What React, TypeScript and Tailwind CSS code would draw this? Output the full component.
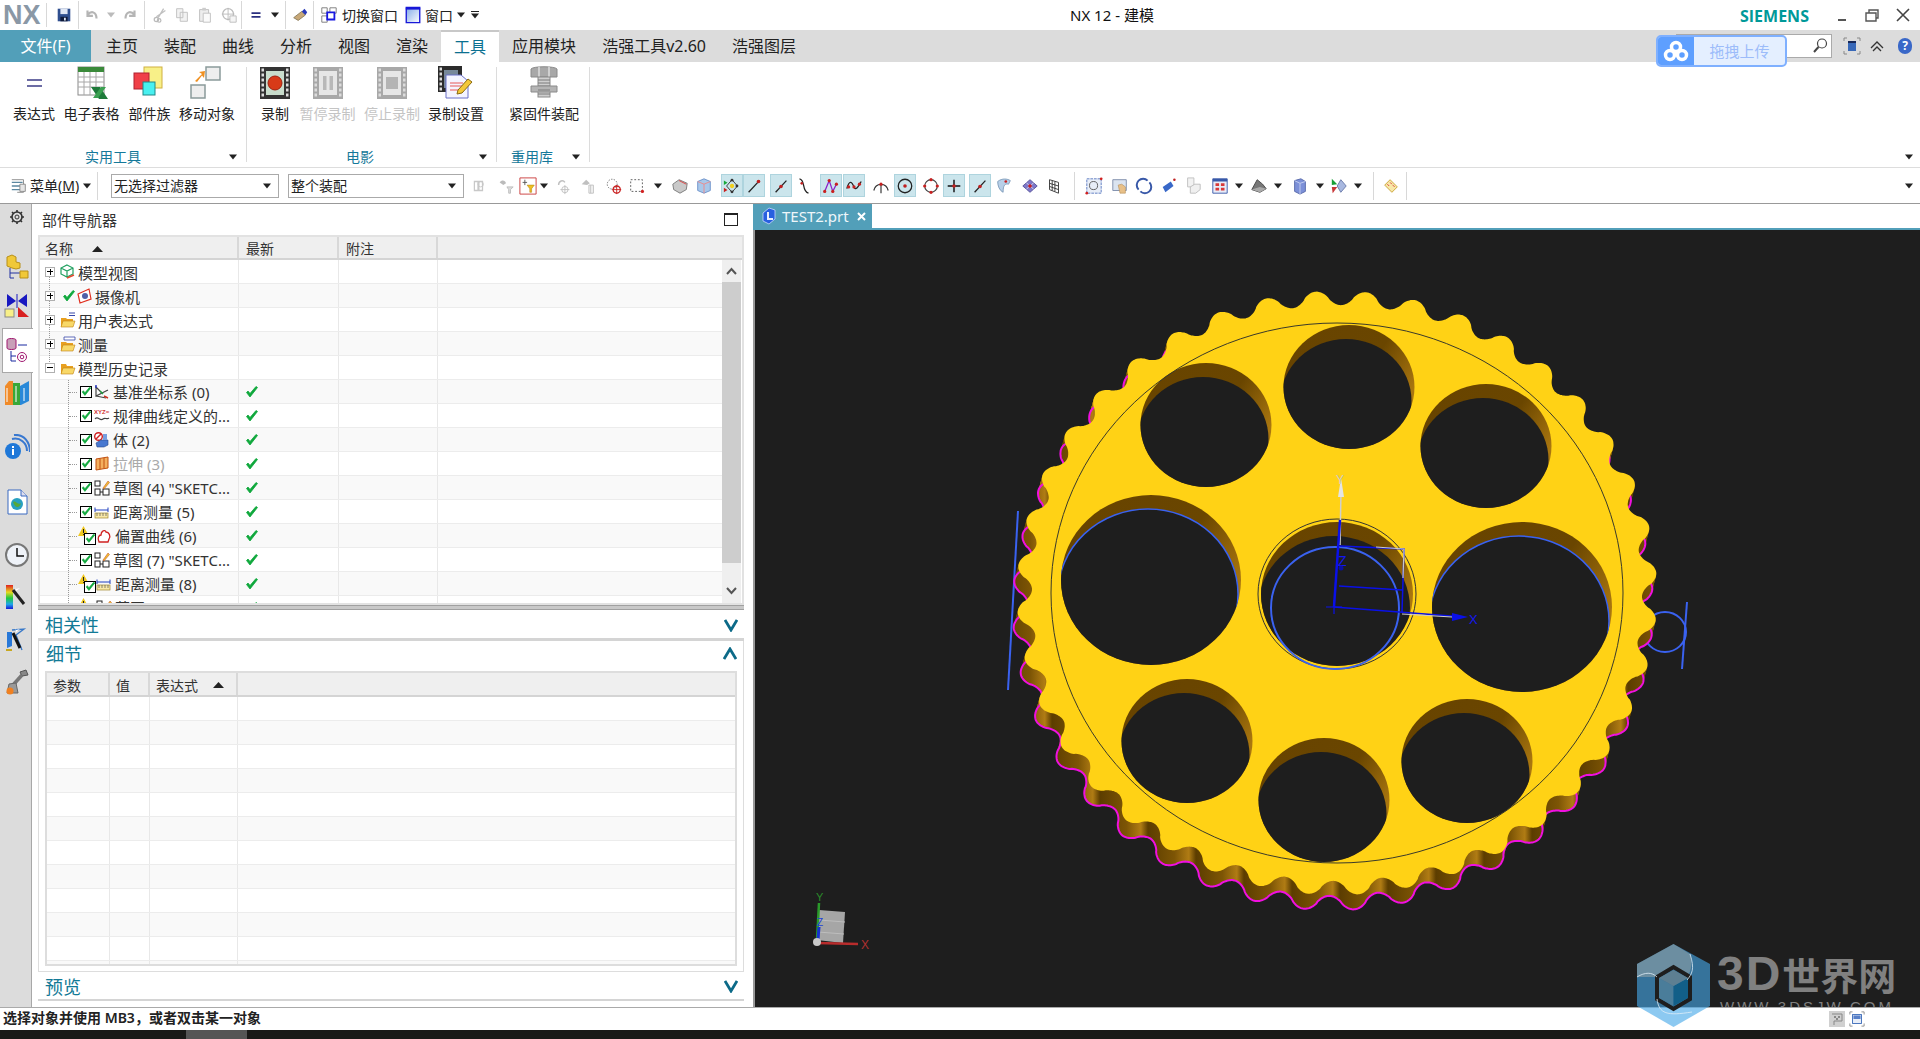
import React from "react";

const cx = 1337, cy = 593, Rx = 320, Ry = 302;
function gearPath() {
  const pts: string[] = [];
  const N = 40, th0 = (5.2 * Math.PI) / 180, A = 15 / 320;
  for (let i = 0; i < 2000; i++) {
    const t = (i / 2000) * Math.PI * 2;
    const c = Math.cos(N * (t - th0));
    const s = Math.sign(c) * Math.pow(Math.abs(c), 0.78);
    const r = 1 - (A * (1 - s)) / 2;
    pts.push(`${(cx + Rx * r * Math.sin(t)).toFixed(1)},${(cy - Ry * r * Math.cos(t)).toFixed(1)}`);
  }
  return "M" + pts.join("L") + "Z";
}
const GEAR = gearPath();
const WALL = [1, 2, 3, 4, 5, 6, 7, 8, 9, 10, 11, 12];
const HOLES = [
  { x: 1349, y: 387, rx: 65.5, ry: 62 },
  { x: 1206, y: 425, rx: 65.5, ry: 62 },
  { x: 1486, y: 446, rx: 65.5, ry: 62 },
  { x: 1151, y: 580, rx: 90, ry: 85, blue: true },
  { x: 1522, y: 607, rx: 90, ry: 85, blue: true },
  { x: 1337, y: 594, rx: 76, ry: 72 },
  { x: 1187, y: 741, rx: 65.5, ry: 62 },
  { x: 1324, y: 800, rx: 65.5, ry: 62 },
  { x: 1467, y: 761, rx: 65.5, ry: 62 },
];

function Model() {
  return (
    <svg viewBox="755 230 1165 777" className="block w-[1165px] h-[777px]">
      <defs>
        <linearGradient id="wall" gradientUnits="userSpaceOnUse" x1="0" y1="0" x2="48" y2="0" spreadMethod="repeat">
          <stop offset="0" stopColor="#5c3d00" />
          <stop offset="0.55" stopColor="#7d5505" />
          <stop offset="0.85" stopColor="#b07c14" />
          <stop offset="1" stopColor="#5c3d00" />
        </linearGradient>
        <linearGradient id="crescent" x1="0.2" y1="0" x2="1" y2="0.5">
          <stop offset="0" stopColor="#684400" />
          <stop offset="0.6" stopColor="#6a4600" />
          <stop offset="1" stopColor="#a9760f" />
        </linearGradient>
        {HOLES.map((h, i) => (
          <clipPath id={`hole${i}`} key={i}>
            <ellipse cx={h.x} cy={h.y} rx={h.rx} ry={h.ry} />
          </clipPath>
        ))}
      </defs>
      <line x1="1018" y1="511" x2="1008" y2="690" stroke="#3a62f0" strokeWidth="2" />
      <line x1="1687" y1="602" x2="1682" y2="669" stroke="#3a62f0" strokeWidth="2" />
      <ellipse cx="1665" cy="632" rx="21" ry="20" fill="none" stroke="#3a62f0" strokeWidth="2" />
      {WALL.map((k) => (
        <path key={k} d={GEAR} transform={`translate(${(-4 * k) / 12} ${(15 * k) / 12})`} fill="url(#wall)" />
      ))}
      <path d={GEAR} transform="translate(-4 15)" fill="none" stroke="#f010e0" strokeWidth="2" />
      <path d={GEAR} fill="#ffd215" />
      {HOLES.map((h, i) => (
        <g key={i}>
          <ellipse cx={h.x} cy={h.y} rx={h.rx} ry={h.ry} fill="url(#crescent)" />
          <ellipse clipPath={`url(#hole${i})`} cx={h.x - 3} cy={h.y + 14} rx={h.rx} ry={h.ry} fill="#1e1e1e" stroke={h.blue ? "#3a62f0" : "none"} strokeWidth="1.5" />
        </g>
      ))}
      <ellipse cx={cx} cy={cy} rx="286" ry="270" fill="none" stroke="#3a3a2a" strokeWidth="1" />
      <ellipse cx="1337" cy="594" rx="79" ry="75" fill="none" stroke="#333" strokeWidth="1" />
      <ellipse cx="1335" cy="608" rx="64" ry="61" fill="none" stroke="#3a62f0" strokeWidth="2" />
      <line x1="1341" y1="490" x2="1340" y2="545" stroke="#cfcfcf" strokeWidth="1.5" />
      <path d="M1341 478 L1344 497 L1338 497 Z" fill="#e4e4e4" />
      <text x="1336" y="484" fill="#c8c8c8" fontSize="12" fontFamily="Liberation Sans, sans-serif">Y</text>
      <line x1="1334" y1="607" x2="1340" y2="520" stroke="#0a10e8" strokeWidth="2.5" />
      <line x1="1334" y1="607" x2="1464" y2="617" stroke="#0a10e8" strokeWidth="1.5" />
      <line x1="1402" y1="614" x2="1452" y2="617" stroke="#cfcfcf" strokeWidth="1" />
      <path d="M1452 613 L1468 617 L1452 621 Z" fill="#0a10e8" />
      <text x="1469" y="624" fill="#1418f0" fontSize="13" fontFamily="Liberation Sans, sans-serif">X</text>
      <text x="1338" y="566" fill="#1418f0" fontSize="14" fontFamily="Liberation Sans, sans-serif">Z</text>
      <circle cx="1341" cy="568" r="2.5" fill="#0a10a0" />
      <path d="M1340 546 L1404 549 L1402 612" fill="none" stroke="#0a10e8" strokeWidth="1.5" />
      <path d="M1376 547 L1404 549 L1403 578" fill="none" stroke="#c8c8c8" strokeWidth="1.2" />
      <line x1="1339" y1="586" x2="1402" y2="590" stroke="#0a10e8" strokeWidth="1.5" />
      <path d="M1326 607 H1342 M1334 600 V614" stroke="#0a10e8" strokeWidth="1.2" />
      <path d="M819 910 L845 912 L843 943 L817 940 Z" fill="#a6a6a6" />
      <path d="M819 920 L845 922 M818 932 L844 934" stroke="#bdbdbd" strokeWidth="1" />
      <line x1="817" y1="940" x2="819" y2="903" stroke="#2a9a2a" strokeWidth="2.5" />
      <line x1="817" y1="943" x2="858" y2="944" stroke="#b82c2c" strokeWidth="2.5" />
      <line x1="818" y1="940" x2="819" y2="927" stroke="#1430d0" strokeWidth="3" />
      <circle cx="817" cy="942" r="4" fill="#c8c8c8" />
      <text x="816" y="901" fill="#2a8a2a" fontSize="11" fontFamily="Liberation Sans, sans-serif">Y</text>
      <text x="861" y="949" fill="#b03030" fontSize="12" fontFamily="Liberation Sans, sans-serif">X</text>
      <text x="817" y="926" fill="#1c40d8" fontSize="10" fontFamily="Liberation Sans, sans-serif">Z</text>
    </svg>
  );
}

const Arrow = ({ c = "#222" }: { c?: string }) => (
  <svg width="10" height="6" viewBox="0 0 10 6" className="shrink-0"><path d="M1 0.5H9L5 5.5Z" fill={c} /></svg>
);

function Ic({ k, s = 20 }: { k: string; s?: number }) {
  const p = { width: s, height: s, viewBox: "0 0 20 20", className: "shrink-0" };
  switch (k) {
    case "save": return <svg {...p}><path d="M3 3H17V17H3Z" fill="#2f4f8f" /><path d="M6 3H14V9H6Z" fill="#dfe6f4" /><path d="M6 12H14V17H6Z" fill="#0e1a3a" /><path d="M10 13H12V16H10Z" fill="#dfe6f4" /></svg>;
    case "undo": return <svg {...p}><path d="M5 5V11H11M5 10C9 5 15 6 15 14" fill="none" stroke="#b5b5b5" strokeWidth="2.4" /></svg>;
    case "redo": return <svg {...p}><path d="M15 5V11H9M15 10C11 5 5 6 5 14" fill="none" stroke="#b5b5b5" strokeWidth="2.4" /></svg>;
    case "cut": return <svg {...p}><path d="M14 3L8 13M16 5L6 12" stroke="#c0c0c0" strokeWidth="1.5" /><circle cx="6" cy="15" r="2.4" fill="none" stroke="#bbb" strokeWidth="1.4" /><circle cx="9" cy="16" r="2" fill="none" stroke="#bbb" strokeWidth="1.4" /></svg>;
    case "copy": return <svg {...p}><path d="M4 3H11V13H4Z M8 7H16V17H8Z" fill="#f2f2f2" stroke="#c0c0c0" /></svg>;
    case "paste": return <svg {...p}><path d="M4 4H14V17H4Z" fill="#ededed" stroke="#bbb" /><path d="M7 2H11V5H7Z" fill="#ccc" /><path d="M8 8H16V18H8Z" fill="#fafafa" stroke="#c0c0c0" /></svg>;
    case "target": return <svg {...p}><circle cx="9" cy="9" r="6" fill="none" stroke="#bbb" strokeWidth="1.4" /><path d="M9 2V16M2 9H16" stroke="#bbb" /><path d="M11 11H18V18H11Z" fill="#f5f5f5" stroke="#bbb" /></svg>;
    case "eq": return <svg {...p}><path d="M5 8H15M5 12H15" stroke="#2a2f7f" strokeWidth="2" /></svg>;
    case "repeat": return <svg {...p}><path d="M3 13L12 6L16 10L8 16Z" fill="#c8a878" stroke="#8a7a5a" /><path d="M12 6L15 3L18 7L16 10Z" fill="#2838b8" /></svg>;
    case "switch": return <svg {...p}><path d="M2 2H8V8H2Z M11 2H18V8H11Z M2 11H8V18H2Z" fill="#fff" stroke="#777" /><path d="M8 7H16V15H8Z" fill="#fff" stroke="#1818e0" strokeWidth="2" /></svg>;
    case "window": return <svg {...p}><defs><linearGradient id="wg" x1="0" y1="0" x2="1" y2="1"><stop offset="0" stopColor="#7fa8e8" /><stop offset="1" stopColor="#fff" /></linearGradient></defs><path d="M2.5 1.5H17.5V18.5H2.5Z" fill="url(#wg)" stroke="#1818d8" strokeWidth="1.5" /><path d="M2 2H18V4H2Z" fill="#1818d8" /></svg>;
    case "menu": return <svg {...p}><path d="M2 6H14M2 10H14M2 14H14" stroke="#5b87a0" strokeWidth="1.6" /><path d="M2 3H15V17H8" fill="none" stroke="#888" /><path d="M11 8H17V16H11Z" fill="#e6e6e6" stroke="#888" /></svg>;
    case "g1": return <svg {...p}><path d="M6 5H10V15H6Z M11 5H15V15H11Z" fill="none" stroke="#c8c8c8" strokeWidth="1.4" /><circle cx="13" cy="8" r="3" fill="none" stroke="#c8c8c8" /></svg>;
    case "g2": return <svg {...p}><path d="M3 6C5 3 9 3 10 7L7 9Z" fill="#bbb" /><path d="M11 11H18L15 14V18H13V14Z" fill="#ddd" stroke="#bbb" /></svg>;
    case "filter": return <svg {...p}><path d="M1 1H19V19H1Z" fill="#fff" stroke="#c83838" /><path d="M4 6H9M6.5 3V9" stroke="#555" /><path d="M9 9H17L14 13V17H12V13Z" fill="#f0c020" stroke="#b08010" strokeWidth=".6" /></svg>;
    case "g3": return <svg {...p}><path d="M4 9C4 4 9 3 11 6" fill="none" stroke="#c0c0c0" strokeWidth="1.6" /><circle cx="11" cy="14" r="3.5" fill="none" stroke="#c0c0c0" /><path d="M11 9V19M6 14H16" stroke="#c0c0c0" /></svg>;
    case "g4": return <svg {...p}><path d="M3 8L8 3L12 7L9 9Z" fill="#c0c0c0" /><path d="M11 9H16V18H11Z" fill="#f4f4f4" stroke="#c0c0c0" /><path d="M13 9V18" stroke="#c0c0c0" /></svg>;
    case "g5": return <svg {...p}><circle cx="8" cy="8" r="5.5" fill="none" stroke="#666" strokeDasharray="1.5 1.5" /><circle cx="13" cy="14" r="4" fill="none" stroke="#c82020" strokeWidth="1.4" /><path d="M13 9V19M8 14H18" stroke="#c82020" /></svg>;
    case "dash": return <svg {...p}><path d="M3 3H16V16H3Z" fill="none" stroke="#555" strokeDasharray="2 2" /><circle cx="16" cy="16" r="1.8" fill="#d02020" /></svg>;
    case "box1": return <svg {...p}><path d="M2 8L9 3L18 7L17 14L10 18L3 14Z" fill="#c9c9c9" stroke="#777" /><path d="M9 4L17 8" stroke="#e04040" /></svg>;
    case "box2": return <svg {...p}><path d="M3 5L10 2L17 5V15L10 18L3 15Z" fill="#a9c8ea" stroke="#6a90c8" /><path d="M3 5L10 8L17 5M10 8V18" stroke="#e88" fill="none" /></svg>;
    case "snap1": return <svg {...p}><path d="M10 3L16 10L10 17L4 10Z" fill="none" stroke="#333" /><circle cx="10" cy="10" r="2.4" fill="#f0d020" /><circle cx="10" cy="3.5" r="1.6" fill="#333" /><circle cx="10" cy="16.5" r="1.6" fill="#333" /><circle cx="15.5" cy="10" r="1.6" fill="#333" /><path d="M1 4L5 6.5L1 9Z" fill="#18a838" /><path d="M1 12L5 14.5L1 17Z" fill="#c82020" /></svg>;
    case "end": return <svg {...p}><path d="M4 17L16 4" stroke="#222" strokeWidth="1.4" /><circle cx="15" cy="5" r="2" fill="#c02020" /></svg>;
    case "mid": return <svg {...p}><path d="M4 17L16 4" stroke="#222" strokeWidth="1.4" /><circle cx="10" cy="10.5" r="2" fill="#c02020" /></svg>;
    case "s": return <svg {...p}><path d="M5 2C12 3 7 16 15 18" fill="none" stroke="#222" strokeWidth="1.4" /><circle cx="7.5" cy="7" r="1.5" fill="#c02020" /></svg>;
    case "ctrl": return <svg {...p}><path d="M3 16L8 4L12 16L16 8" fill="none" stroke="#8a20c8" strokeWidth="1.4" /><circle cx="3" cy="16" r="1.8" fill="#c82020" /><circle cx="8" cy="4" r="1.8" fill="#c82020" /><circle cx="12" cy="16" r="1.8" fill="#c82020" /><circle cx="16" cy="8" r="1.8" fill="#c82020" /></svg>;
    case "wave": return <svg {...p}><path d="M2 13C5 2 8 6 10 11C12 16 15 10 18 5" fill="none" stroke="#222" strokeWidth="1.4" /><circle cx="4" cy="11" r="1.8" fill="#c82020" /><circle cx="10" cy="11" r="1.8" fill="#c82020" /><circle cx="16" cy="8" r="1.8" fill="#c82020" /></svg>;
    case "arc": return <svg {...p}><path d="M2 15C4 6 16 6 18 15M10 8V18" fill="none" stroke="#333" strokeWidth="1.3" /><circle cx="10" cy="8" r="1.8" fill="#c82020" /></svg>;
    case "circ": return <svg {...p}><circle cx="10" cy="10" r="7.5" fill="none" stroke="#222" strokeWidth="1.4" /><circle cx="10" cy="10" r="2" fill="#c02020" /></svg>;
    case "circ2": return <svg {...p}><circle cx="10" cy="10" r="7" fill="none" stroke="#444" strokeWidth="1.3" />{[[10,3],[10,17],[3,10],[17,10]].map((a,i)=><circle key={i} cx={a[0]} cy={a[1]} r="1.8" fill="#c82020" />)}</svg>;
    case "cross": return <svg {...p}><path d="M10 3V17M3 10H17" stroke="#111" strokeWidth="1.6" /><circle cx="10" cy="10" r="2" fill="#c02020" /></svg>;
    case "surf": return <svg {...p}><path d="M3 5C8 1 14 2 17 4L15 8C11 7 9 9 9 17C5 15 3 10 3 5Z" fill="#b8d0e8" stroke="#7a98b8" /><circle cx="12" cy="5" r="1.5" fill="#c82020" /></svg>;
    case "diamond": return <svg {...p}><path d="M10 3L18 10L10 17L2 10Z" fill="#7e78c8" stroke="#55509a" /><path d="M6 6.5L14 13.5M14 6.5L6 13.5" stroke="#d8d8f0" /><circle cx="10" cy="10" r="2" fill="#c82020" /></svg>;
    case "grid": return <svg {...p}><path d="M5 3L15 6V18L5 14Z M8 4V15M11 5V16M5 7L15 10M5 10.500L15 14" fill="none" stroke="#333" /></svg>;
    case "fit": return <svg {...p}><path d="M2 2H18V18H2Z" fill="#e8eef8" stroke="#5878c0" strokeDasharray="3 1" /><circle cx="9.500" cy="9.500" r="4.500" fill="none" stroke="#555" /><circle cx="18" cy="2" r="1.500" fill="#d02020" /><circle cx="2" cy="18" r="1.500" fill="#d02020" /></svg>;
    case "hand": return <svg {...p}><path d="M2 3H17V15H2Z" fill="#dbe4f0" stroke="#7a8aa8" /><path d="M8 9L12 8L16 11V18H10Z" fill="#e8c088" stroke="#b08850" strokeWidth=".6" /></svg>;
    case "rot": return <svg {...p}><path d="M4 14A7 7 0 0 1 14 4M16 6A7 7 0 0 1 6 16" fill="none" stroke="#3858a8" strokeWidth="2.2" /></svg>;
    case "cyl": return <svg {...p}><path d="M3 11L12 5L15 10L6 17Z" fill="#3868c8" /><circle cx="16" cy="3" r="1.400" fill="#c02020" /></svg>;
    case "ghost": return <svg {...p}><path d="M4 1H11V11H4Z" fill="#f2f2f2" stroke="#c0c0c0" /><path d="M7 11L12 8H18V14L13 18H7Z" fill="#f0f0f0" stroke="#bbb" /></svg>;
    case "win4": return <svg {...p}><path d="M2 2H18V18H2Z" fill="#e8ecf8" stroke="#3858a8" /><path d="M2 2H18V5H2Z" fill="#3858a8" /><path d="M5 7H9V10H5Z M11 7H15V10H11Z M5 12H9V15H5Z M11 12H15V15H11Z" fill="#d83838" /></svg>;
    case "shade": return <svg {...p}><path d="M2 14L8 3L14 8L18 13L11 17Z" fill="#777" stroke="#444" /><path d="M2 14L11 17L18 13L11 11Z" fill="#aaa" /></svg>;
    case "cube": return <svg {...p}><path d="M4 4L11 2L16 5V16L10 19L4 16Z" fill="#7c90d8" stroke="#5668a8" /><path d="M4 4L10 7L16 5M10 7V19" fill="none" stroke="#c6d0f0" /></svg>;
    case "trio": return <svg {...p}><path d="M2 2L8 8L2 9Z" fill="#18a038" /><path d="M2 11L8 11L3 18Z" fill="#c83838" /><path d="M12 3L18 10L12 17L8 10Z" fill="#a8b8e0" stroke="#6878a8" /></svg>;
    case "ruler": return <svg {...p}><path d="M3 9L9 3L17 11L11 17Z" fill="#f8e8a8" stroke="#c8a030" /><path d="M6 8L8 10M9 6L11 8M12 9L14 11" stroke="#d83838" /></svg>;
    default: return <svg {...p} />;
  }
}

function Film({ k, off }: { k: string; off?: boolean }) {
  const body = off ? "#a8a8a8" : "#333";
  return (
    <svg width="30" height="32" viewBox="0 0 30 32">
      <path d="M0 0H30V32H0Z" fill={body} />
      {[3, 8, 13, 18, 23, 28].map((y) => (
        <g key={y} fill={off ? "#dcdcdc" : "#ddd"}>
          <rect x="1.500" y={y - 1.500} width="2.500" height="3" />
          <rect x="26" y={y - 1.500} width="2.500" height="3" />
        </g>
      ))}
      <rect x="6" y="4" width="18" height="24" fill={off ? "#e6e6e6" : "#c8dccc"} />
      {k === "rec" && <circle cx="15" cy="16" r="7" fill="#d83a18" stroke="#a02010" />}
      {k === "pause" && <path d="M10 9H13.500V23H10Z M16.500 9H20V23H16.500Z" fill="#b8b8b8" />}
      {k === "stop" && <path d="M9 10H21V22H9Z" fill="#b4b4b4" />}
    </svg>
  );
}

function RibbonIcon({ k }: { k: string }) {
  switch (k) {
    case "eq": return <svg width="34" height="34" viewBox="0 0 34 34"><path d="M10 14H25M10 20H25" stroke="#3d3d86" strokeWidth="1.500" /></svg>;
    case "xls": return <svg width="34" height="34" viewBox="0 0 34 34"><rect x="3" y="1" width="26" height="28" fill="#fff" stroke="#8a8a8a" /><rect x="3" y="1" width="26" height="5" fill="#3a8a3a" /><path d="M3 11H29M3 16H29M3 21H29M9 6V29M15 6V29M21 6V29" stroke="#a8a8a8" /><path d="M16 21H25L33 33H24Z" fill="#1e7a3a" /><path d="M18 32L26 21H31L23 32Z" fill="#3aa050" /></svg>;
    case "fam": return <svg width="34" height="34" viewBox="0 0 34 34"><rect x="11" y="1" width="18" height="21" fill="#f8f088" stroke="#d0b040" /><rect x="1" y="7" width="15" height="16" fill="#f04048" stroke="#b02030" /><rect x="10" y="16" width="12" height="13" fill="#48f0f0" stroke="#208888" /></svg>;
    case "move": return <svg width="34" height="34" viewBox="0 0 34 34"><rect x="16" y="1" width="14" height="13" fill="#eee" stroke="#8a9a9a" strokeWidth="1.500" /><rect x="1" y="19" width="14" height="13" fill="#eee" stroke="#8a9a9a" strokeWidth="1.500" /><path d="M5 15L12 8L9 6L15 5L14 12L12 9.500L7 16Z" fill="#f09020" /></svg>;
    case "set": return <svg width="36" height="34" viewBox="0 0 36 34"><rect x="0" y="0" width="24" height="26" fill="#2b2b2b" />{[3,8,13,18,23].map(y=><rect key={y} x="1.500" y={y-1.500} width="2.500" height="3" fill="#ddd" />)}<rect x="6" y="4" width="14" height="18" fill="#789" /><path d="M8 9H23L30 15V32H8Z" fill="#f4f4ff" stroke="#6a70c8" /><path d="M12 17H25M12 20H25M12 24H25" stroke="#e85858" strokeWidth="1.200" /><path d="M20 24L30 13L34 16L24 27L19 28Z" fill="#f4c838" stroke="#8a6a10" /></svg>;
    case "bolt": return <svg width="34" height="34" viewBox="0 0 34 34"><path d="M4 3C6 0 28 0 30 3V11H4Z" fill="#a8a8a8" stroke="#8a8a8a" /><path d="M12 1V11M22 1V11" stroke="#ddd" strokeWidth="1.500" /><rect x="11" y="11" width="12" height="20" fill="#cfcfcf" stroke="#8a8a8a" /><path d="M11 14H23M11 17H23M11 20H23" stroke="#7a7a7a" /><path d="M4 20H30V26H4Z" fill="#b4b4b4" stroke="#8a8a8a" /><path d="M11 24H23M11 28H23" stroke="#7a7a7a" /></svg>;
    default: return null;
  }
}

const RB = ({ ic, label, cls, off, film }: { ic?: string; label: string; cls: string; off?: boolean; film?: string }) => (
  <div className={`flex flex-col items-center pt-[4px] ${cls}`}>
    <div className="h-[34px] flex items-center justify-center">{film ? <Film k={film} off={off} /> : <RibbonIcon k={ic!} />}</div>
    <div className={`mt-[4px] leading-[20px] text-[14px] whitespace-nowrap ${off ? "text-[#c4c4c4]" : "text-[#222]"}`}>{label}</div>
  </div>
);

const GroupFoot = ({ label, lw, aml }: { label: string; lw: string; aml: string }) => (
  <div className="h-[20px] flex items-center mt-auto mb-[0px]">
    <div className={`${lw} text-center text-[14px] leading-[20px] text-[#15799a] whitespace-nowrap`}>{label}</div>
    <div className={aml}><Arrow /></div>
  </div>
);

const Tab = ({ t, active }: { t: string; active?: boolean }) => (
  <div className={`h-[32px] px-[13px] flex items-center text-[16px] leading-none whitespace-nowrap ${active ? "bg-white text-[#0b7090] border-t-2 border-[#c8c8c8]" : "text-[#222]"}`}>{t}</div>
);

const TB = ({ k, ml, sel }: { k: string; ml: string; sel?: boolean }) => (
  <div className={`w-[22px] h-[23px] shrink-0 flex items-center justify-center ${ml} ${sel ? "bg-[#cbe5ec] border border-[#aed4de]" : ""}`}><Ic k={k} s={18} /></div>
);
const TA = ({ ml }: { ml: string }) => <div className={`w-[10px] shrink-0 flex justify-center ${ml}`}><Arrow /></div>;
const TS = ({ ml }: { ml: string }) => <div className={`w-px h-[28px] shrink-0 bg-[#d8d8d8] ${ml}`} />;

const Check = ({ c = "#0fa83c", s = 14 }: { c?: string; s?: number }) => (
  <svg width={s} height={s} viewBox="0 0 14 14" className="shrink-0"><path d="M1.500 7.500L5 12L12.500 2.500L11 1.500L5 8.500L3 6Z" fill={c} stroke={c} strokeWidth=".8" /></svg>
);
const Box = () => (
  <div className="w-[12px] h-[12px] border border-black bg-white relative shrink-0">
    <div className="absolute left-[0px] top-[-1px]"><Check s={11} /></div>
  </div>
);
const Warn = () => (
  <svg width="11" height="10" viewBox="0 0 11 10" className="shrink-0"><path d="M5.500 0L11 10H0Z" fill="#f0c820" /><path d="M5 3H6V7H5Z M5 8H6V9H5Z" fill="#222" /></svg>
);
const Expander = ({ minus }: { minus?: boolean }) => (
  <div className="w-[10px] h-[10px] border border-[#b0b0b0] bg-white relative shrink-0">
    <div className="absolute left-[1px] top-[3px] w-[6px] h-px bg-black" />
    {!minus && <div className="absolute left-[3.500px] top-[1px] w-px h-[6px] bg-black" />}
  </div>
);

function TreeIcon({ k }: { k: string }) {
  const p = { width: 16, height: 16, viewBox: "0 0 16 16", className: "shrink-0" };
  switch (k) {
    case "view": return <svg {...p}><path d="M7 1L13 4V10L7 13L1 10V4Z M1 4L7 7L13 4M7 7V13" fill="none" stroke="#20a060" strokeWidth="1.200" /><path d="M7 14L14 11" stroke="#e84830" strokeWidth="1.500" /></svg>;
    case "cam": return <svg {...p}><path d="M1 6L12 1L14 11L3 15Z" fill="#fff" stroke="#e03020" strokeWidth="1.200" /><circle cx="8" cy="8" r="3" fill="#5060a8" /></svg>;
    case "folder": return <svg {...p}><path d="M1 4H6L7 6H13V14H1Z" fill="#e8a020" /><path d="M3 8H15L13 14H1Z" fill="#f8d868" stroke="#c08010" strokeWidth=".6" /></svg>;
    case "fexpr": return <svg {...p}><path d="M1 6H6L7 7H13V15H1Z" fill="#e8a020" /><path d="M3 9H15L13 15H1Z" fill="#f8d868" stroke="#c08010" strokeWidth=".6" /><path d="M9 1H15M9 3.500H15" stroke="#3848a8" /></svg>;
    case "fmeas": return <svg {...p}><path d="M1 6H6L7 7H13V15H1Z" fill="#e8a020" /><path d="M3 9H15L13 15H1Z" fill="#f8d868" stroke="#c08010" strokeWidth=".6" /><path d="M4 1H15V4H4Z" fill="#fff" stroke="#3848a8" strokeWidth=".8" /></svg>;
    case "datum": return <svg {...p}><path d="M2 3V12L8 9Z M2 12L12 14M8 9L14 6" fill="none" stroke="#444" strokeWidth="1.200" /><path d="M2 1V4" stroke="#2030c0" strokeWidth="1.400" /><path d="M10 12L14 14" stroke="#d03020" strokeWidth="1.400" /><path d="M6 7L9 10" stroke="#20a040" strokeWidth="1.400" /></svg>;
    case "law": return <svg {...p}><text x="0" y="6" fontSize="6" fontWeight="700" fill="#d03030" fontFamily="Liberation Sans, sans-serif">XYZ=</text><path d="M1 11C4 7 6 14 9 11C11 9 13 12 15 10" fill="none" stroke="#444" strokeWidth="1.100" /></svg>;
    case "body": return <svg {...p}><circle cx="4.500" cy="4.500" r="3.800" fill="#fff" stroke="#d02020" strokeWidth="1.400" /><path d="M2 7L7 2" stroke="#d02020" strokeWidth="1.400" /><path d="M2 11L7 8H14V13L10 15H3Z" fill="#4878d0" stroke="#284888" strokeWidth=".6" /><path d="M9 2H13V8H9Z" fill="#78a0e0" /></svg>;
    case "ext": return <svg {...p}><path d="M2 3L14 1V12L2 14Z" fill="#f4b060" stroke="#c05010" /><path d="M6 2.500V13M10 2V12.500" stroke="#c05010" /></svg>;
    case "sketch": return <svg {...p}><rect x="1" y="1" width="5" height="5" fill="#fff" stroke="#222" /><rect x="1" y="9" width="5" height="6" fill="#fff" stroke="#222" /><rect x="9" y="9" width="6" height="6" fill="#fff" stroke="#222" /><path d="M6 12H9" stroke="#222" /><path d="M9 8L14 1L15.500 2.500L10 9Z" fill="#f0c030" stroke="#c04020" strokeWidth=".5" /></svg>;
    case "meas": return <svg {...p}><path d="M1 6H14M1 3.500V8M14 3.500V8" stroke="#2040c0" fill="none" /><rect x="1" y="9" width="13" height="5" fill="#f8e8a8" stroke="#a08830" strokeWidth=".7" /><path d="M3 9V12M6 9V12M9 9V12M12 9V12" stroke="#555" strokeWidth=".7" /></svg>;
    case "off": return <svg {...p}><path d="M3 14C1 10 3 7 5 7C5 3 9 1 10 4C13 4 15 8 13 11L12 14Z" fill="#fff" stroke="#d02020" strokeWidth="1.300" /></svg>;
    default: return null;
  }
}

type Row = { ic: string; t: string; warn?: boolean; gray?: boolean };
const ROWS: Row[] = [
  { ic: "datum", t: "基准坐标系 (0)" },
  { ic: "law", t: "规律曲线定义的..." },
  { ic: "body", t: "体 (2)" },
  { ic: "ext", t: "拉伸 (3)", gray: true },
  { ic: "sketch", t: '草图 (4) "SKETC...' },
  { ic: "meas", t: "距离测量 (5)" },
  { ic: "off", t: "偏置曲线 (6)", warn: true },
  { ic: "sketch", t: '草图 (7) "SKETC...' },
  { ic: "meas", t: "距离测量 (8)", warn: true },
  { ic: "sketch", t: '草图 (9) "SKETC...', warn: true },
];
const ROOTS = [
  { ic: "view", t: "模型视图" },
  { ic: "cam", t: "摄像机", check: true },
  { ic: "fexpr", t: "用户表达式" },
  { ic: "fmeas", t: "测量" },
  { ic: "folder", t: "模型历史记录", minus: true },
];

const Cells = ({ odd, name, latest }: { odd: boolean; name: React.ReactNode; latest?: boolean }) => (
  <div className={`flex h-[24px] shrink-0 border-b border-[#ececec] ${odd ? "bg-[#f9f9f9]" : "bg-white"}`}>
    <div className="w-[199px] shrink-0 border-r border-[#e8e8e8] relative flex items-center">{name}</div>
    <div className="w-[100px] shrink-0 border-r border-[#e8e8e8] flex items-center pl-[6px]">{latest && <Check />}</div>
    <div className="w-[99px] shrink-0 border-r border-[#e8e8e8]" />
  </div>
);

const SideIcon = ({ k }: { k: string }) => {
  const p = { width: 26, height: 26, viewBox: "0 0 26 26" };
  switch (k) {
    case "gear": return <svg width="16" height="16" viewBox="0 0 16 16"><circle cx="8" cy="8" r="5" fill="none" stroke="#333" strokeWidth="1.600" /><circle cx="8" cy="8" r="2" fill="none" stroke="#333" /><path d="M8 1V3M8 13V15M1 8H3M13 8H15M3 3L4.500 4.500M11.500 11.500L13 13M3 13L4.500 11.500M11.500 4.500L13 3" stroke="#333" strokeWidth="1.600" /></svg>;
    case "assy": return <svg {...p}><path d="M3 3L8 1L12 3V8L16 9V14L12 15L8 14L3 12Z" fill="#f0c838" stroke="#b89018" /><path d="M6 14V24H10M6 19H24" fill="none" stroke="#2030a0" /><path d="M16 17H24V24H16Z" fill="#f0c838" stroke="#b89018" /></svg>;
    case "con": return <svg {...p}><path d="M3 1L12 8L3 14Z M23 1L14 8L23 14Z" fill="#1818c0" /><path d="M13 1V15" stroke="#1818c0" /><rect x="1" y="16" width="9" height="8" fill="#f8f088" stroke="#888" /><path d="M14 14L25 24H14Z" fill="#d82020" /></svg>;
    case "part": return <svg {...p}><path d="M2 2C2 0 11 0 11 2V10C11 12 2 12 2 10Z" fill="#c8a0b8" stroke="#a01870" /><path d="M13 7H22M6 13V23H11M6 18H11" fill="none" stroke="#1828a0" /><circle cx="17" cy="19" r="4.500" fill="none" stroke="#a01870" /><circle cx="17" cy="19" r="1.800" fill="none" stroke="#a01870" /></svg>;
    case "books": return <svg {...p}><path d="M1 6L5 1H9V25H1Z" fill="#f08a28" /><path d="M9 3H16V25H9Z" fill="#38a838" /><path d="M16 6L25 1V21L17 25H16Z" fill="#2888d8" /><path d="M3 8V22M12 6V22M20 8V21" stroke="#fff" strokeWidth="1" /></svg>;
    case "info": return <svg {...p}><path d="M8 5C16 3 23 9 23 17M10 1C20 0 26 8 26 18" fill="none" stroke="#3878d0" strokeWidth="2" /><circle cx="9" cy="17" r="8" fill="#1f78d8" /><path d="M8 12H10V14H8Z M8 15H10V21H8Z" fill="#fff" /></svg>;
    case "doc": return <svg {...p}><path d="M4 1H17L23 7V25H4Z" fill="#fff" stroke="#3868c0" /><path d="M17 1V7H23" fill="#dde" stroke="#3868c0" /><circle cx="13" cy="15" r="6" fill="#28a0c0" /><path d="M9 13C12 11 14 17 17 14C16 19 11 20 9 13Z" fill="#58a838" /></svg>;
    case "clock": return <svg {...p}><circle cx="13" cy="13" r="11" fill="#eef2f8" stroke="#777" strokeWidth="2" /><path d="M13 6V14H20" fill="none" stroke="#111" strokeWidth="1.500" /></svg>;
    case "rain": return <svg {...p}><defs><linearGradient id="rb" x1="0" y1="0" x2="0" y2="1"><stop offset="0" stopColor="#e02020" /><stop offset=".3" stopColor="#e8d820" /><stop offset=".55" stopColor="#20c840" /><stop offset=".8" stopColor="#20a8e8" /><stop offset="1" stopColor="#1818d8" /></linearGradient></defs><path d="M2 1H9V25H2Z" fill="url(#rb)" /><path d="M9 6L20 20" stroke="#222" strokeWidth="3" /><path d="M11 1L12 5L16 4L12 7Z" fill="#fff" /></svg>;
    case "wand": return <svg {...p}><path d="M3 6H8V20L3 22Z" fill="#2878d8" /><path d="M8 4L20 3L12 9L18 24" fill="none" stroke="#3878c8" strokeWidth="1.300" /><path d="M9 7L16 22" stroke="#111" strokeWidth="3" /><path d="M11 0L12 4L16 3L12 6Z" fill="#fff" /><path d="M2 24H8" stroke="#c8a820" strokeWidth="2" /></svg>;
    case "robot": return <svg {...p}><path d="M16 3L22 1L24 6L18 7Z" fill="#888" stroke="#555" /><path d="M18 6L9 16" stroke="#777" strokeWidth="3.500" /><path d="M5 15L12 14L14 24H3Z" fill="#999" stroke="#666" /><circle cx="6" cy="22" r="3.500" fill="#f08020" /></svg>;
    default: return null;
  }
};

const Side = ({ k, cls, active }: { k: string; cls: string; active?: boolean }) => (
  <div className={`shrink-0 ml-[2px] flex items-center justify-center ${cls} ${active ? "bg-white border-y border-l border-[#a8a8a8] w-[31px] relative z-10" : "w-[30px]"}`}><SideIcon k={k} /></div>
);

const Sec = ({ t, up, h, pad }: { t: string; up?: boolean; h: string; pad: string }) => (
  <div className={`${h} flex items-center justify-between pl-[7px] pr-[6px] shrink-0`}>
    <span className={`text-[18px] leading-none text-[#127a96] ${pad}`}>{t}</span>
    <div className={pad}>
      <svg width="14" height="13" viewBox="0 0 14 13" className="block">
        <path d={up ? "M1 12L7 2L13 12" : "M1 1L7 11L13 1"} fill="none" stroke="#0c6a88" strokeWidth="2.800" />
      </svg>
    </div>
  </div>
);

const Head = ({ cls, children }: { cls: string; children?: React.ReactNode }) => (
  <div className={`h-full flex items-center pt-[2px] shrink-0 border-r-2 border-[#d8d8d8] text-[14px] text-[#333] ${cls}`}>{children}</div>
);

export default function App() {
  return (
    <div className="relative w-[1920px] h-[1039px] overflow-hidden bg-white flex flex-col font-['Noto_Sans','Noto_Sans_CJK_SC',sans-serif] text-[14px]">
      {/* title */}
      <div className="h-[30px] shrink-0 flex items-center relative">
        <span className="ml-[3px] w-[39px] text-[27px] leading-none font-bold text-[#8a98a6] font-['Liberation_Sans',sans-serif]">NX</span>
        <div className="w-px h-[24px] bg-[#d8d8d8] ml-[4px]" />
        <div className="ml-[8px]"><Ic k="save" s={18} /></div>
        <TS ml="ml-[5px]" />
        <div className="ml-[4px]"><Ic k="undo" s={18} /></div>
        <div className="ml-[5px]"><Arrow c="#bbb" /></div>
        <div className="ml-[5px]"><Ic k="redo" s={18} /></div>
        <TS ml="ml-[5px]" />
        <div className="ml-[6px]"><Ic k="cut" s={18} /></div>
        <div className="ml-[4px]"><Ic k="copy" s={18} /></div>
        <div className="ml-[5px]"><Ic k="paste" s={18} /></div>
        <div className="ml-[6px]"><Ic k="target" s={18} /></div>
        <TS ml="ml-[3px]" />
        <div className="ml-[5px]"><Ic k="eq" s={18} /></div>
        <div className="ml-[5px]"><Arrow /></div>
        <TS ml="ml-[5px]" />
        <div className="ml-[5px]"><Ic k="repeat" s={18} /></div>
        <TS ml="ml-[4px]" />
        <div className="ml-[6px]"><Ic k="switch" s={18} /></div>
        <span className="ml-[4px] whitespace-nowrap text-[#222]">切换窗口</span>
        <div className="ml-[6px]"><Ic k="window" s={18} /></div>
        <span className="ml-[3px] whitespace-nowrap text-[#222]">窗口</span>
        <div className="ml-[3px]"><Arrow /></div>
        <div className="ml-[4px] flex flex-col items-center gap-[1px]"><div className="w-[8px] h-px bg-[#222]" /><Arrow /></div>
        <div className="absolute left-[1070px] top-[4px] text-[15px] leading-[22px] whitespace-nowrap text-[#111]">NX 12 - 建模</div>
        <span className="absolute left-[1740px] top-[6px] text-[16px] leading-[20px] font-bold text-[#009999] font-['Open_Sans',sans-serif]">SIEMENS</span>
        <svg className="absolute left-[1838px] top-[8px]" width="76" height="16" viewBox="0 0 76 16">
          <path d="M0 12H8" stroke="#555" strokeWidth="2" />
          <path d="M28 5H38V13H28Z M31 5V2H40V10H38" fill="none" stroke="#555" strokeWidth="1.400" />
          <path d="M59 1L71 13M71 1L59 13" stroke="#444" strokeWidth="1.600" />
        </svg>
      </div>

      {/* tabs */}
      <div className="h-[32px] shrink-0 bg-[#dcdcdc] flex items-center relative">
        <div className="w-[91px] h-[32px] bg-[#529fb9] text-white text-[16px] flex items-center justify-center mr-[2px]">文件(F)</div>
        {["主页", "装配", "曲线", "分析", "视图", "渲染"].map((t) => <Tab key={t} t={t} />)}
        <Tab t="工具" active />
        {["应用模块", "浩强工具v2.60", "浩强图层"].map((t) => <Tab key={t} t={t} />)}
        <div className="ml-auto flex items-center pr-[8px]">
          <div className="w-[156px] h-[24px] bg-white border border-[#aaa] flex items-center justify-end pr-[3px] mr-[11px]">
            <svg width="16" height="18" viewBox="0 0 16 18"><circle cx="10" cy="6.500" r="4.500" fill="#fff" stroke="#444" strokeWidth="1.200" /><path d="M6.500 10L2 15" stroke="#444" strokeWidth="2" /></svg>
          </div>
          <svg width="18" height="18" viewBox="0 0 18 18"><path d="M1 4V1H4M14 1H17V4M17 14V17H14M4 17H1V14" fill="none" stroke="#888" /><rect x="5" y="4" width="8" height="10" fill="#3868b8" /><rect x="5" y="4" width="8" height="2" fill="#182858" /></svg>
          <svg className="ml-[9px]" width="14" height="12" viewBox="0 0 14 12"><path d="M1 8L7 2L13 8M3 11L7 7L11 11" fill="none" stroke="#333" strokeWidth="1.300" /></svg>
          <div className="ml-[14px] w-[14px] h-[16px] rounded-full bg-[#3a68c8] text-white text-[12px] leading-[16px] font-bold text-center">?</div>
        </div>
      </div>

      {/* ribbon */}
      <div className="h-[105px] shrink-0 flex relative">
        <div className="w-[246px] shrink-0 flex flex-col">
          <div className="flex pl-[9px]">
            <RB ic="eq" label="表达式" cls="w-[50px]" />
            <RB ic="xls" label="电子表格" cls="w-[65px]" />
            <RB ic="fam" label="部件族" cls="w-[51px]" />
            <RB ic="move" label="移动对象" cls="w-[64px]" />
          </div>
          <GroupFoot label="实用工具" lw="w-[226px]" aml="ml-[2px]" />
        </div>
        <div className="w-px my-[5px] bg-[#dcdcdc]" />
        <div className="w-[249px] shrink-0 flex flex-col">
          <div className="flex pl-[8px]">
            <RB film="rec" label="录制" cls="w-[40px]" />
            <RB film="pause" off label="暂停录制" cls="w-[65px]" />
            <RB film="stop" off label="停止录制" cls="w-[64px]" />
            <RB ic="set" label="录制设置" cls="w-[64px]" />
          </div>
          <GroupFoot label="电影" lw="w-[226px]" aml="ml-[5px]" />
        </div>
        <div className="w-px my-[5px] bg-[#dcdcdc]" />
        <div className="w-[92px] shrink-0 flex flex-col">
          <div className="flex pl-[8px]"><RB ic="bolt" label="紧固件装配" cls="w-[78px]" /></div>
          <GroupFoot label="重用库" lw="w-[70px]" aml="ml-[4px]" />
        </div>
        <div className="w-px my-[5px] bg-[#dcdcdc]" />
        <div className="ml-auto mt-auto mb-[7px] mr-[6px]"><Arrow /></div>
      </div>
      <div className="h-[1px] shrink-0 bg-[#dddddd]" />

      {/* toolbar */}
      <div className="h-[35px] shrink-0 flex items-center relative">
        <div className="ml-[10px]"><Ic k="menu" s={18} /></div>
        <span className="ml-[2px] whitespace-nowrap text-[14px] text-[#222]">菜单(<span className="underline">M</span>)</span>
        <div className="ml-[3px]"><Arrow /></div>
        <div className="w-px h-[28px] bg-[#d8d8d8] ml-[5px]" />
        <div className="ml-[13px] w-[168px] h-[24px] border border-[#aaa] flex items-center justify-between pl-[2px] pr-[6px] text-[#222]">无选择过滤器<Arrow /></div>
        <div className="ml-[9px] w-[176px] h-[24px] border border-[#aaa] flex items-center justify-between pl-[2px] pr-[6px] text-[#222]">整个装配<Arrow /></div>
        <TB k="g1" ml="ml-[3px]" />
        <TB k="g2" ml="ml-[6px]" />
        <TB k="filter" ml="ml-[0px]" />
        <TA ml="ml-[0px]" />
        <TB k="g3" ml="ml-[4px]" />
        <TB k="g4" ml="ml-[2px]" />
        <TB k="g5" ml="ml-[4px]" />
        <TB k="dash" ml="ml-[1px]" />
        <TA ml="ml-[5px]" />
        <TB k="box1" ml="ml-[6px]" />
        <TB k="box2" ml="ml-[2px]" />
        <TB k="snap1" ml="ml-[6px]" sel />
        <TB k="end" ml="ml-[0px]" sel />
        <TB k="mid" ml="ml-[5px]" sel />
        <TB k="s" ml="ml-[1px]" />
        <TB k="ctrl" ml="ml-[5px]" sel />
        <TB k="wave" ml="ml-[1px]" sel />
        <TB k="arc" ml="ml-[5px]" />
        <TB k="circ" ml="ml-[2px]" sel />
        <TB k="circ2" ml="ml-[4px]" />
        <TB k="cross" ml="ml-[1px]" sel />
        <TB k="mid" ml="ml-[4px]" sel />
        <TB k="surf" ml="ml-[2px]" />
        <TB k="diamond" ml="ml-[4px]" />
        <TB k="grid" ml="ml-[2px]" />
        <TS ml="ml-[9px]" />
        <TB k="fit" ml="ml-[8px]" />
        <TB k="hand" ml="ml-[4px]" />
        <TB k="rot" ml="ml-[2px]" />
        <TB k="cyl" ml="ml-[3px]" />
        <TB k="ghost" ml="ml-[2px]" />
        <TB k="win4" ml="ml-[5px]" />
        <TA ml="ml-[3px]" />
        <TB k="shade" ml="ml-[4px]" />
        <TA ml="ml-[3px]" />
        <TB k="cube" ml="ml-[6px]" />
        <TA ml="ml-[4px]" />
        <TB k="trio" ml="ml-[3px]" />
        <TA ml="ml-[3px]" />
        <TS ml="ml-[10px]" />
        <TB k="ruler" ml="ml-[6px]" />
        <TS ml="ml-[4px]" />
        <div className="ml-auto mr-[6px]"><Arrow /></div>
      </div>
      <div className="h-[1px] shrink-0 bg-[#999]" />

      {/* main */}
      <div className="flex-1 flex min-h-0">
        <div className="w-[32px] shrink-0 bg-[#dcdcdc] border-r border-[#a8a8a8] flex flex-col items-start">
          <Side k="gear" cls="h-[26px]" />
          <Side k="assy" cls="h-[36px] mt-[19px]" />
          <Side k="con" cls="h-[36px] mt-[3px]" />
          <Side k="part" cls="h-[45px] mt-[4px]" active />
          <Side k="books" cls="h-[36px] mt-[2px]" />
          <Side k="info" cls="h-[36px] mt-[18px]" />
          <Side k="doc" cls="h-[36px] mt-[19px]" />
          <Side k="clock" cls="h-[36px] mt-[17px]" />
          <Side k="rain" cls="h-[36px] mt-[6px]" />
          <Side k="wand" cls="h-[36px] mt-[6px]" />
          <Side k="robot" cls="h-[36px] mt-[7px]" />
        </div>

        <div className="w-[721px] shrink-0 pl-[6px] pr-[9px] flex flex-col">
          <div className="h-[31px] shrink-0 flex items-center justify-between pl-[4px] pr-[6px]">
            <span className="text-[15px] leading-none pt-[2px] text-[#333]">部件导航器</span>
            <div className="w-[14px] h-[13px] border border-[#222] border-t-2" />
          </div>
          <div className="h-[370px] shrink-0 border-2 border-[#e2e2e2] flex flex-col overflow-hidden">
            <div className="h-[23px] shrink-0 bg-[#efefef] border-b-2 border-[#d4d4d4] flex">
              <Head cls="w-[199px] pl-[5px]">名称<span className="ml-[19px]"><svg width="11" height="6" viewBox="0 0 11 6"><path d="M0 6L5.500 0L11 6Z" fill="#222" /></svg></span></Head>
              <Head cls="w-[100px] pl-[7px]">最新</Head>
              <Head cls="w-[99px] pl-[7px]">附注</Head>
            </div>
            <div className="flex-1 flex min-h-0">
              <div className="w-[682px] shrink-0 flex flex-col overflow-hidden">
                {ROOTS.map((r, i) => (
                  <Cells key={r.t} odd={i % 2 === 1} name={
                    <div className="flex items-center pl-[5px] w-full h-full">
                      {i < 4 && <div className="absolute left-[9px] top-[12px] h-[24px] border-l border-dotted border-[#999]" />}
                      <div className="relative"><Expander minus={r.minus} /></div>
                      {r.check ? (<div className="ml-[7px] flex items-center gap-[1px]"><Check /><TreeIcon k={r.ic} /></div>) : (<div className="ml-[5px]"><TreeIcon k={r.ic} /></div>)}
                      <span className="ml-[2px] whitespace-nowrap text-[15px] leading-none pt-[3px] text-[#333]">{r.t}</span>
                    </div>
                  } />
                ))}
                {ROWS.map((r, i) => (
                  <Cells key={i} odd={i % 2 === 0} latest name={
                    <div className="flex items-center w-full h-full relative">
                      <div className="absolute left-[28px] top-0 bottom-0 border-l border-dotted border-[#999]" />
                      <div className="absolute left-[29px] top-[12px] w-[8px] border-t border-dotted border-[#999]" />
                      {r.warn ? (
                        <div className="ml-[38px] w-[16px] h-[20px] relative shrink-0">
                          <div className="absolute left-0 top-0"><Warn /></div>
                          <div className="absolute left-[6px] top-[7px]"><Box /></div>
                        </div>
                      ) : (
                        <div className="ml-[40px] w-[14px] shrink-0"><Box /></div>
                      )}
                      <div className={r.warn ? "ml-[2px]" : "ml-[0px]"}><TreeIcon k={r.ic} /></div>
                      <span className={`ml-[3px] whitespace-nowrap text-[15px] leading-none pt-[2px] ${r.gray ? "text-[#aaa]" : "text-[#333]"}`}>{r.t}</span>
                    </div>
                  } />
                ))}
              </div>
              <div className="w-[19px] shrink-0 bg-[#efefef] flex flex-col">
                <div className="h-[22px] shrink-0 flex items-center justify-center"><svg width="11" height="8" viewBox="0 0 11 8"><path d="M1 7L5.500 2L10 7" fill="none" stroke="#555" strokeWidth="2" /></svg></div>
                <div className="h-[281px] shrink-0 bg-[#cdcdcd]" />
                <div className="flex-1 flex items-end justify-center pb-[8px]"><svg width="11" height="8" viewBox="0 0 11 8"><path d="M1 1L5.500 6L10 1" fill="none" stroke="#555" strokeWidth="2" /></svg></div>
              </div>
            </div>
          </div>
          <div className="h-[5px] shrink-0 bg-[#c8c8c8] border-y border-[#a0a0a0]" />
          <Sec t="相关性" h="h-[28px]" pad="pt-[2px]" />
          <div className="h-[3px] shrink-0 bg-[#d4d4d4]" />
          <div className="shrink-0 border-x border-b border-[#dddddd] flex flex-col h-[331px]">
            <Sec t="细节" up h="h-[30px]" pad="pb-[5px]" />
            <div className="mx-[6px] h-[295px] shrink-0 border-2 border-[#dddddd] flex flex-col overflow-hidden">
              <div className="h-[24px] shrink-0 bg-[#efefef] border-b-2 border-[#d4d4d4] flex">
                <Head cls="w-[63px] pl-[6px]">参数</Head>
                <Head cls="w-[40px] pl-[6px]">值</Head>
                <Head cls="w-[88px] pl-[6px]">表达式<span className="ml-[15px]"><svg width="11" height="6" viewBox="0 0 11 6"><path d="M0 6L5.500 0L11 6Z" fill="#222" /></svg></span></Head>
              </div>
              {[0, 1, 2, 3, 4, 5, 6, 7, 8, 9, 10, 11].map((i) => (
                <div key={i} className={`h-[24px] shrink-0 flex border-b border-[#ececec] ${i % 2 ? "bg-[#f9f9f9]" : "bg-white"}`}>
                  <div className="w-[63px] shrink-0 border-r border-[#e8e8e8]" />
                  <div className="w-[40px] shrink-0 border-r border-[#e8e8e8]" />
                  <div className="w-[88px] shrink-0 border-r border-[#e8e8e8]" />
                </div>
              ))}
            </div>
          </div>
          <Sec t="预览" h="h-[27px]" pad="pt-[2px]" />
          <div className="h-[2px] shrink-0 bg-[#d4d4d4]" />
        </div>

        <div className="flex-1 flex flex-col min-w-0">
          <div className="h-[24px] shrink-0 flex">
            <div className="w-[119px] bg-[#529fb9] flex items-center pl-[8px] text-white">
              <svg width="16" height="18" viewBox="0 0 16 18"><path d="M2 6L8 1L14 3V12L8 17L2 14Z" fill="#2860e0" stroke="#c8d8ff" strokeWidth=".8" /><path d="M7 5V12H12" fill="none" stroke="#e8f0ff" strokeWidth="2" /></svg>
              <span className="ml-[5px] text-[15px] leading-none text-[#eef6fa]">TEST2.prt</span>
              <svg className="ml-[8px]" width="9" height="9" viewBox="0 0 9 9"><path d="M1 1L8 8M8 1L1 8" stroke="#fff" strokeWidth="2" /></svg>
            </div>
          </div>
          <div className="h-[2px] shrink-0 bg-[#529fb9]" />
          <div className="flex-1 border-l-2 border-[#999] bg-[#1e1e1e] relative overflow-hidden min-h-0">
            <Model />
            <div className="absolute left-[962px] top-[724px] flex items-baseline whitespace-nowrap leading-[40px] font-bold text-[#808080] font-['Liberation_Sans','Noto_Sans_CJK_SC',sans-serif]">
              <span className="text-[48px] tracking-[2px]">3D</span>
              <span className="text-[38px]">世界网</span>
            </div>
            <div className="absolute left-[965px] top-[769px] whitespace-nowrap text-[15px] leading-[16px] tracking-[3px] text-[#808080] font-['Liberation_Sans',sans-serif]">WWW.3DSJW.COM</div>
          </div>
        </div>
      </div>

      {/* status */}
      <div className="h-[23px] shrink-0 border-t border-[#aaa] bg-white flex items-center pl-[3px] relative">
        <span className="text-[14px] leading-none pb-[2px] font-semibold text-[#222] whitespace-nowrap">选择对象并使用 MB3，或者双击某一对象</span>
        <div className="absolute left-[1829px] top-[3px] w-[16px] h-[16px] bg-[#d0d0d0] flex items-center justify-center">
          <svg width="12" height="12" viewBox="0 0 12 12"><path d="M1 1H11V8H3V12" fill="none" stroke="#888" /><path d="M3 3H5V5H3Z M7 3H9V5H7Z M5 5H7V7H5Z" fill="#888" /></svg>
        </div>
        <div className="absolute left-[1849px] top-[3px]">
          <svg width="16" height="16" viewBox="0 0 18 18"><path d="M1 4V1H4M14 1H17V4M17 14V17H14M4 17H1V14" fill="none" stroke="#888" /><rect x="4" y="4" width="10" height="10" fill="#e8eef8" stroke="#3868b8" /><rect x="5" y="5" width="8" height="4" fill="#5880c8" /></svg>
        </div>
      </div>
      <div className="h-[9px] shrink-0 bg-[#191917] flex overflow-hidden">
        <div className="ml-[186px] w-[61px] h-full bg-[#555555]" />
      </div>

      {/* watermark hexagon over viewport and status */}
      <svg className="absolute left-[1637px] top-[944px] pointer-events-none" width="73" height="83" viewBox="0 0 73 83">
        <path d="M36.500 0L73 20V62L36.500 83L0 62V20Z" fill="#45a8e8" opacity=".62" />
        <path d="M36.500 0L53 10C56 20 54 28 50 33L36.500 24L20 33L0 33V20Z" fill="#b0b0a8" opacity=".45" />
        <path d="M20 33L36.500 23L53 33V55L36.500 65L20 55Z" fill="none" stroke="#1e1e1e" strokeWidth="4" />
        <path d="M22 34L36.500 42V62L22 54Z" fill="#4a7d9a" />
        <path d="M51 34L36.500 42V62L51 54Z" fill="#125f88" />
        <path d="M22 34L36.500 26L51 34L36.500 42Z" fill="#5d7f92" />
        <path d="M53 10C58 25 55 30 50 36M0 33C8 28 15 28 20 33M20 55C22 70 30 72 55 68" fill="none" stroke="#dfeef8" strokeWidth=".8" />
      </svg>

      {/* upload widget */}
      <div className="absolute left-[1656px] top-[35px] w-[131px] h-[32px] rounded-[5px] border-2 border-[#7fb0ff] bg-[#e4efff] flex overflow-hidden">
        <div className="w-[36px] h-full bg-[#5e9fff] flex items-center justify-center">
          <svg width="26" height="22" viewBox="0 0 26 22"><g fill="none" stroke="#fff" strokeWidth="3.500"><circle cx="13" cy="7" r="4.500" /><circle cx="7" cy="15" r="4.500" /><circle cx="19" cy="15" r="4.500" /></g></svg>
        </div>
        <div className="flex-1 flex items-center justify-center text-[15px] text-[#9cbcfa]">拖拽上传</div>
      </div>
    </div>
  );
}
